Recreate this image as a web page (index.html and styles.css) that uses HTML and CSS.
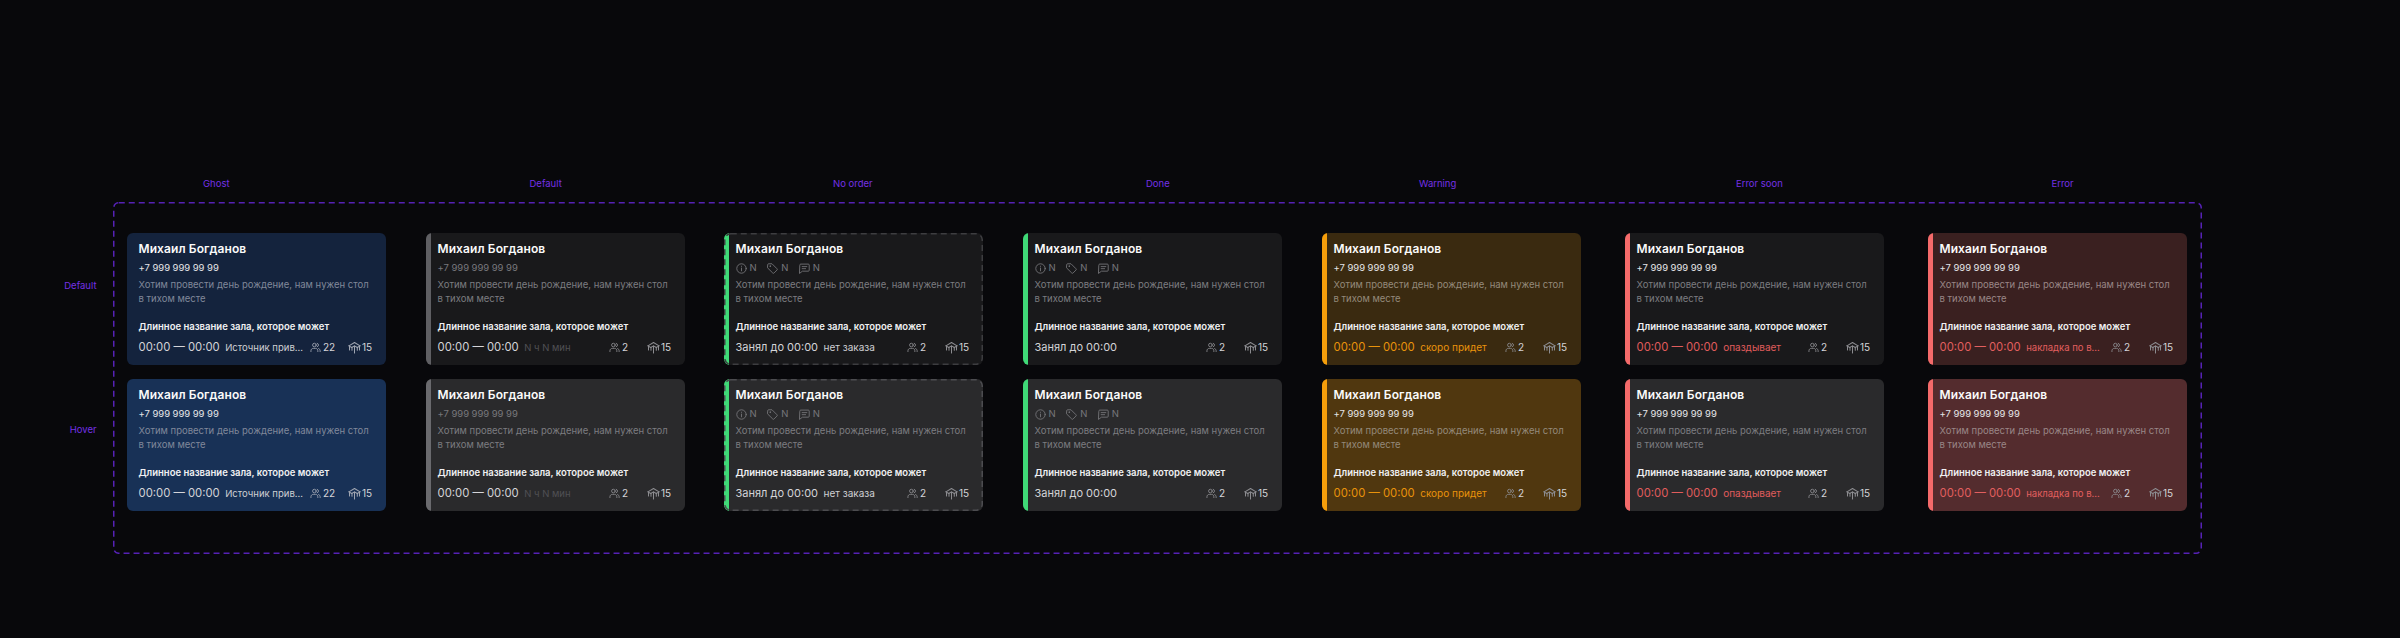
FILE: index.html
```html
<!DOCTYPE html>
<html lang="ru">
<head>
<meta charset="utf-8">
<title>Карточки заказов</title>
<link rel="stylesheet" href="styles.css">
</head>
<body>
<svg class="defs" width="0" height="0" aria-hidden="true">
  <symbol id="i-people" viewBox="0 0 14 14"><circle cx="5.6" cy="3.9" r="2.3"/><path d="M1.2 12.2v-1.1c0-1.7 1.4-3 3-3h2.8c1.7 0 3 1.3 3 3v1.1"/><path d="M9.2 1.7a2.3 2.3 0 0 1 0 4.4"/><path d="M11 8.3c1.1.4 1.9 1.5 1.9 2.8v1.1"/></symbol>
  <symbol id="i-box" viewBox="0 0 14 14"><path d="M1 5.2 7 1.6l6 3.6"/><path d="M1 5.2 4 7l3-1.8L10 7l3-1.8"/><path d="M1.6 5.6v4.2M7 5.4v7.4M12.4 5.6v4.2"/><path d="M4.3 7v3"/><path d="M10 7v3"/></symbol>
  <symbol id="i-info" viewBox="0 0 14 14"><circle cx="7" cy="7" r="6"/><path d="M7 6.4v3.6M7 4v.3"/></symbol>
  <symbol id="i-tag" viewBox="0 0 14 14"><path d="M.9 2a1 1 0 0 1 1-1h4.5l6.3 6.3a1.2 1.2 0 0 1 0 1.7l-3.7 3.7a1.2 1.2 0 0 1-1.7 0L.9 6.4z"/><circle cx="4" cy="4" r=".5"/></symbol>
  <symbol id="i-chat" viewBox="0 0 14 14"><path d="M1 2.6a1.2 1.2 0 0 1 1.2-1.2h9.6A1.2 1.2 0 0 1 13 2.6v6.6a1.2 1.2 0 0 1-1.2 1.2H4.4L1 13z"/><path d="M4 4.6h6M4 7.2h4.4"/></symbol>
</svg>
<main class="page">
  <div class="col-labels">
    <span>Ghost</span><span>Default</span><span>No order</span><span>Done</span><span>Warning</span><span>Error soon</span><span>Error</span>
  </div>
  <div class="body-row">
    <div class="row-labels"><span>Default</span><span>Hover</span></div>
    <section class="frame">
      <svg class="frame-dash" width="2089" height="352" aria-hidden="true"><rect x=".75" y=".75" width="2087.5" height="350.5" rx="5"/></svg>

      <article class="card ghost">
        <h3>Михаил Богданов</h3><p class="phone">+7 999 999 99 99</p>
        <p class="desc">Хотим провести день рождение, нам нужен стол в тихом месте</p>
        <p class="hall">Длинное название зала, которое может</p>
        <div class="foot"><span class="time">00:00 — 00:00</span><span class="note small">Источник прив...</span>
          <span class="metric people"><svg class="ic"><use href="#i-people"/></svg>22</span><span class="metric box"><svg class="ic"><use href="#i-box"/></svg>15</span></div>
      </article>
      <article class="card default">
        <h3>Михаил Богданов</h3><p class="phone dim">+7 999 999 99 99</p>
        <p class="desc">Хотим провести день рождение, нам нужен стол в тихом месте</p>
        <p class="hall">Длинное название зала, которое может</p>
        <div class="foot"><span class="time">00:00 — 00:00</span><span class="note small dimmer">N ч N мин</span>
          <span class="metric people"><svg class="ic"><use href="#i-people"/></svg>2</span><span class="metric box"><svg class="ic"><use href="#i-box"/></svg>15</span></div>
      </article>
      <article class="card green dashed">
        <svg class="card-dash" width="259" height="132" aria-hidden="true"><rect x=".75" y=".75" width="257.5" height="130.5" rx="6"/></svg>
        <h3>Михаил Богданов</h3>
        <div class="tags"><span><svg class="ic"><use href="#i-info"/></svg>N</span><span><svg class="ic"><use href="#i-tag"/></svg>N</span><span><svg class="ic"><use href="#i-chat"/></svg>N</span></div>
        <p class="desc">Хотим провести день рождение, нам нужен стол в тихом месте</p>
        <p class="hall">Длинное название зала, которое может</p>
        <div class="foot"><span class="time busy">Занял до 00:00</span><span class="note">нет заказа</span>
          <span class="metric people"><svg class="ic"><use href="#i-people"/></svg>2</span><span class="metric box"><svg class="ic"><use href="#i-box"/></svg>15</span></div>
      </article>
      <article class="card green">
        <h3>Михаил Богданов</h3>
        <div class="tags"><span><svg class="ic"><use href="#i-info"/></svg>N</span><span><svg class="ic"><use href="#i-tag"/></svg>N</span><span><svg class="ic"><use href="#i-chat"/></svg>N</span></div>
        <p class="desc">Хотим провести день рождение, нам нужен стол в тихом месте</p>
        <p class="hall">Длинное название зала, которое может</p>
        <div class="foot"><span class="time busy">Занял до 00:00</span>
          <span class="metric people"><svg class="ic"><use href="#i-people"/></svg>2</span><span class="metric box"><svg class="ic"><use href="#i-box"/></svg>15</span></div>
      </article>
      <article class="card warning">
        <h3>Михаил Богданов</h3><p class="phone">+7 999 999 99 99</p>
        <p class="desc">Хотим провести день рождение, нам нужен стол в тихом месте</p>
        <p class="hall">Длинное название зала, которое может</p>
        <div class="foot"><span class="time">00:00 — 00:00</span><span class="note">скоро придет</span>
          <span class="metric people"><svg class="ic"><use href="#i-people"/></svg>2</span><span class="metric box"><svg class="ic"><use href="#i-box"/></svg>15</span></div>
      </article>
      <article class="card soon">
        <h3>Михаил Богданов</h3><p class="phone">+7 999 999 99 99</p>
        <p class="desc">Хотим провести день рождение, нам нужен стол в тихом месте</p>
        <p class="hall">Длинное название зала, которое может</p>
        <div class="foot"><span class="time">00:00 — 00:00</span><span class="note">опаздывает</span>
          <span class="metric people"><svg class="ic"><use href="#i-people"/></svg>2</span><span class="metric box"><svg class="ic"><use href="#i-box"/></svg>15</span></div>
      </article>
      <article class="card error">
        <h3>Михаил Богданов</h3><p class="phone">+7 999 999 99 99</p>
        <p class="desc">Хотим провести день рождение, нам нужен стол в тихом месте</p>
        <p class="hall">Длинное название зала, которое может</p>
        <div class="foot"><span class="time">00:00 — 00:00</span><span class="note small">накладка по в...</span>
          <span class="metric people"><svg class="ic"><use href="#i-people"/></svg>2</span><span class="metric box"><svg class="ic"><use href="#i-box"/></svg>15</span></div>
      </article>

      <article class="card ghost hover">
        <h3>Михаил Богданов</h3><p class="phone">+7 999 999 99 99</p>
        <p class="desc">Хотим провести день рождение, нам нужен стол в тихом месте</p>
        <p class="hall">Длинное название зала, которое может</p>
        <div class="foot"><span class="time">00:00 — 00:00</span><span class="note small">Источник прив...</span>
          <span class="metric people"><svg class="ic"><use href="#i-people"/></svg>22</span><span class="metric box"><svg class="ic"><use href="#i-box"/></svg>15</span></div>
      </article>
      <article class="card default hover">
        <h3>Михаил Богданов</h3><p class="phone dim">+7 999 999 99 99</p>
        <p class="desc">Хотим провести день рождение, нам нужен стол в тихом месте</p>
        <p class="hall">Длинное название зала, которое может</p>
        <div class="foot"><span class="time">00:00 — 00:00</span><span class="note small dimmer">N ч N мин</span>
          <span class="metric people"><svg class="ic"><use href="#i-people"/></svg>2</span><span class="metric box"><svg class="ic"><use href="#i-box"/></svg>15</span></div>
      </article>
      <article class="card green dashed hover">
        <svg class="card-dash" width="259" height="132" aria-hidden="true"><rect x=".75" y=".75" width="257.5" height="130.5" rx="6"/></svg>
        <h3>Михаил Богданов</h3>
        <div class="tags"><span><svg class="ic"><use href="#i-info"/></svg>N</span><span><svg class="ic"><use href="#i-tag"/></svg>N</span><span><svg class="ic"><use href="#i-chat"/></svg>N</span></div>
        <p class="desc">Хотим провести день рождение, нам нужен стол в тихом месте</p>
        <p class="hall">Длинное название зала, которое может</p>
        <div class="foot"><span class="time busy">Занял до 00:00</span><span class="note">нет заказа</span>
          <span class="metric people"><svg class="ic"><use href="#i-people"/></svg>2</span><span class="metric box"><svg class="ic"><use href="#i-box"/></svg>15</span></div>
      </article>
      <article class="card green hover">
        <h3>Михаил Богданов</h3>
        <div class="tags"><span><svg class="ic"><use href="#i-info"/></svg>N</span><span><svg class="ic"><use href="#i-tag"/></svg>N</span><span><svg class="ic"><use href="#i-chat"/></svg>N</span></div>
        <p class="desc">Хотим провести день рождение, нам нужен стол в тихом месте</p>
        <p class="hall">Длинное название зала, которое может</p>
        <div class="foot"><span class="time busy">Занял до 00:00</span>
          <span class="metric people"><svg class="ic"><use href="#i-people"/></svg>2</span><span class="metric box"><svg class="ic"><use href="#i-box"/></svg>15</span></div>
      </article>
      <article class="card warning hover">
        <h3>Михаил Богданов</h3><p class="phone">+7 999 999 99 99</p>
        <p class="desc">Хотим провести день рождение, нам нужен стол в тихом месте</p>
        <p class="hall">Длинное название зала, которое может</p>
        <div class="foot"><span class="time">00:00 — 00:00</span><span class="note">скоро придет</span>
          <span class="metric people"><svg class="ic"><use href="#i-people"/></svg>2</span><span class="metric box"><svg class="ic"><use href="#i-box"/></svg>15</span></div>
      </article>
      <article class="card soon hover">
        <h3>Михаил Богданов</h3><p class="phone">+7 999 999 99 99</p>
        <p class="desc">Хотим провести день рождение, нам нужен стол в тихом месте</p>
        <p class="hall">Длинное название зала, которое может</p>
        <div class="foot"><span class="time">00:00 — 00:00</span><span class="note">опаздывает</span>
          <span class="metric people"><svg class="ic"><use href="#i-people"/></svg>2</span><span class="metric box"><svg class="ic"><use href="#i-box"/></svg>15</span></div>
      </article>
      <article class="card error hover">
        <h3>Михаил Богданов</h3><p class="phone">+7 999 999 99 99</p>
        <p class="desc">Хотим провести день рождение, нам нужен стол в тихом месте</p>
        <p class="hall">Длинное название зала, которое может</p>
        <div class="foot"><span class="time">00:00 — 00:00</span><span class="note small">накладка по в...</span>
          <span class="metric people"><svg class="ic"><use href="#i-people"/></svg>2</span><span class="metric box"><svg class="ic"><use href="#i-box"/></svg>15</span></div>
      </article>
    </section>
  </div>
</main>
</body>
</html>
```

FILE: styles.css
```css
* { box-sizing: border-box; }
html, body { margin: 0; height: 100%; }
body {
  background: #08080b;
  color: #f4f4f5;
  font-family: Inter, "Liberation Sans", sans-serif;
  overflow: hidden;
}
.defs { position: absolute; }
.page { padding-top: 177px; }

.col-labels {
  display: grid;
  grid-template-columns: 326.5px 303.5px 313px 273px 317px 315.5px auto;
  justify-content: start;
  height: 25px;
  padding-left: 203px;
  font-size: 9.5px;
  line-height: 14px;
  color: #7530e6;
}
.body-row { display: flex; }
.row-labels {
  width: 113px;
  padding: 77px 16.5px 0 0;
  display: flex;
  flex-direction: column;
  align-items: flex-end;
  gap: 130px;
  font-size: 9.5px;
  line-height: 14px;
  color: #7530e6;
}

.frame {
  position: relative;
  width: 2089px;
  height: 352px;
  padding: 31px 14px 0;
  display: grid;
  grid-template-columns: 299px 298px 299px 299px 303px 303px 259px;
  grid-auto-rows: 132px;
  row-gap: 14px;
}
.frame-dash { position: absolute; left: 0; top: 0; pointer-events: none; }
.frame-dash rect { fill: none; stroke: #5521b5; stroke-width: 1.5; stroke-dasharray: 6 4; }

.card {
  position: relative;
  width: 259px;
  height: 132px;
  padding: 8px 15px 0 11.5px;
  border-radius: 6px;
  background: #19191b;
  overflow: hidden;
  display: flex;
  flex-direction: column;
}
.card::before {
  content: "";
  position: absolute;
  left: 0; top: 0; bottom: 0;
  width: 5px;
  background: var(--bar, transparent);
}
.card.hover { background: #2a2a2c; }

.card-dash { position: absolute; left: 0; top: 0; pointer-events: none; }
.card-dash rect { fill: none; stroke: #3d3d40; stroke-width: 1.5; stroke-dasharray: 6 4; }
.hover .card-dash rect { stroke: #4c4c50; }

h3 {
  margin: 0;
  font-size: 12px;
  line-height: 16px;
  font-weight: 600;
  letter-spacing: .1px;
  color: #fafafa;
}
.phone {
  margin: 4px 0 0;
  font-size: 9.5px;
  line-height: 14px;
  letter-spacing: -.05px;
  color: #e4e4e7;
}
.phone.dim { color: #77777b; }
.tags {
  margin-top: 4px;
  height: 14px;
  display: flex;
  gap: 10.5px;
  font-size: 9.5px;
  line-height: 14px;
  color: #77777b;
}
.tags span { display: flex; align-items: center; gap: 3px; }
.ic {
  width: 11px;
  height: 11px;
  fill: none;
  stroke: currentColor;
  stroke-width: 1.1;
  stroke-linecap: round;
  stroke-linejoin: round;
  flex: none;
}
.desc {
  margin: 3px 0 0;
  font-size: 9.5px;
  line-height: 14px;
  height: 28px;
  width: 236px;
  color: #7c7c80;
}
.hall {
  margin: 14px 0 0;
  font-size: 9.5px;
  line-height: 14px;
  font-weight: 600;
  color: #f0f0f2;
  white-space: nowrap;
}
.foot {
  margin-top: 5px;
  display: flex;
  align-items: center;
  height: 16px;
  white-space: nowrap;
}
.time { font-size: 11.3px; color: #d4d4d8; flex: none; }
.time.busy { font-size: 11px; }
.note {
  margin-left: 5.5px;
  font-size: 10px;
  color: #cfcfd3;
}
.note.small { font-size: 9.5px; }
.note.dimmer { color: #505054; }
.metric {
  display: flex;
  align-items: center;
  flex: none;
  font-size: 10px;
  color: #d4d4d8;
}
.metric .ic { color: #8c8c90; }
.metric.people { margin-left: auto; width: 38px; gap: 2px; }
.metric.box { width: 23px; gap: 1px; }
.metric.box .ic { width: 13px; height: 13px; }

.ghost { background: #14233d; }
.ghost.hover { background: #183156; }
.ghost .desc { color: #80889a; }
.ghost .metric .ic { color: #a0a6b2; }

.default { --bar: #5f5f63; }
.default.hover { --bar: #6a6a6e; }
.green { --bar: #3fd977; }
.warning { --bar: #f59e0b; background: #3a2a10; }
.warning.hover { background: #50370f; }
.warning .desc { color: #94897a; }
.warning .time, .warning .note { color: #e9930b; }
.soon { --bar: #f46a6a; }
.soon .time, .soon .note { color: #e05c5c; }
.error { --bar: #f46a6a; background: #3a2020; }
.error.hover { background: #542c2e; }
.error .desc { color: #998686; }
.error .time, .error .note { color: #e25f5f; }
```
